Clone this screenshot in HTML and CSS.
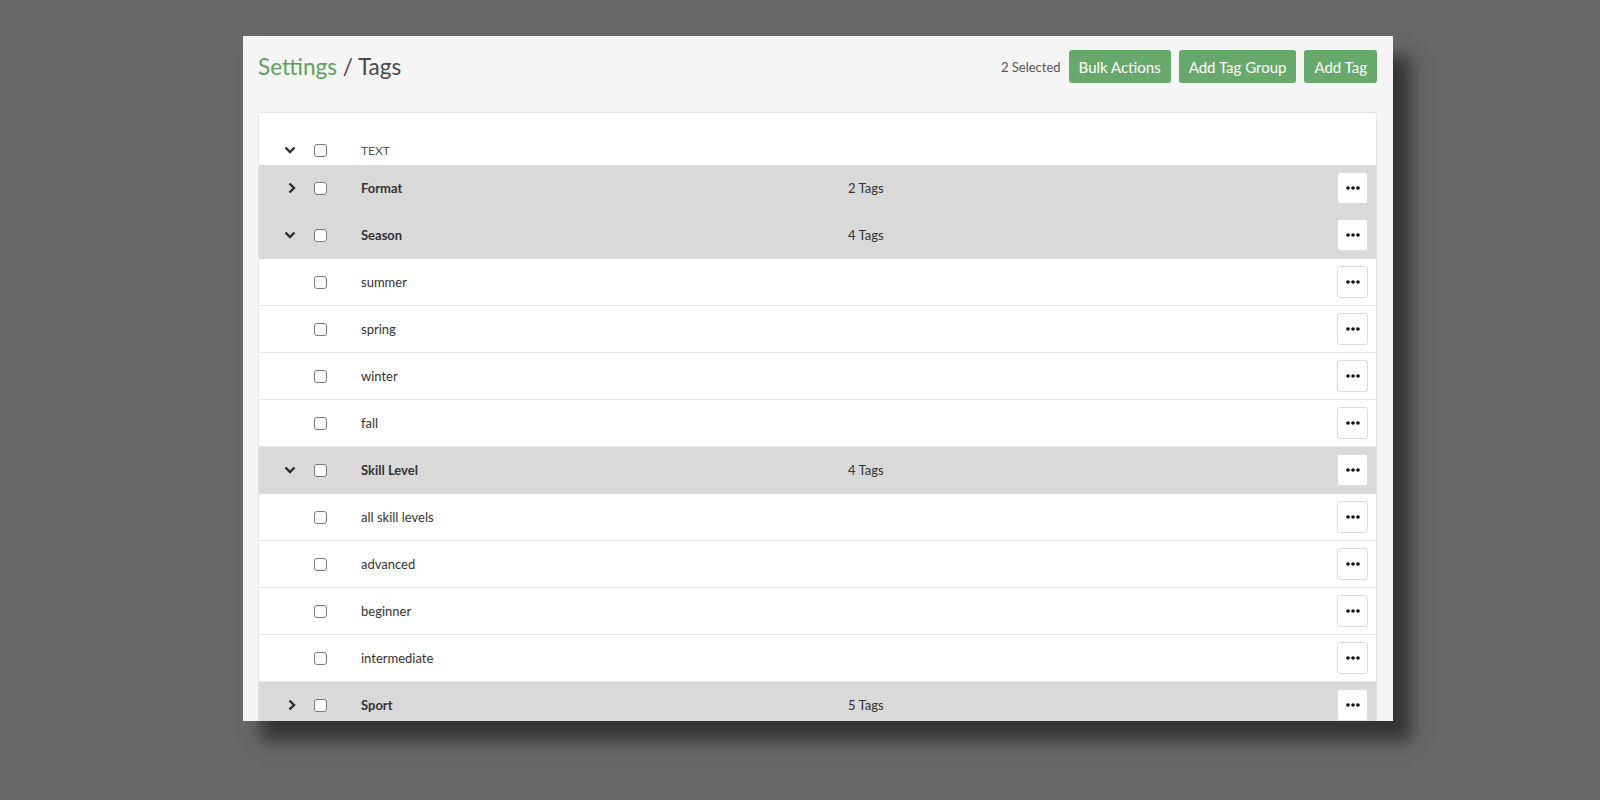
FILE: index.html
```html
<!DOCTYPE html>
<html>
<head>
  <meta charset='utf-8'>
  <title>Settings / Tags</title>
  <meta name='viewport' content='width=device-width, initial-scale=1'>
  <link rel="stylesheet" href="styles.css">
</head>

<body>
  <div class="window">
    <div class="topbar">
      <div class="title"><span class="crumb">Settings</span> / Tags</div>
      <div class="actions">
        <span class="selected">2 Selected</span>
        <button class="btn">Bulk Actions</button>
        <button class="btn">Add Tag Group</button>
        <button class="btn">Add Tag</button>
      </div>
    </div>

    <div class="card">
      <div class="head">
        <div class="toggle"><svg class="chev" width="12" height="8" viewBox="0 0 12 8"><path d="M1.5 1.5 6 6 10.5 1.5" /></svg></div>
        <div class="check"><span class="box"></span></div>
        <div class="name">TEXT</div>
      </div>

      <div class="row group">
        <div class="toggle"><svg class="chev" width="8" height="12" viewBox="0 0 8 12"><path d="M1.5 1.5 6 6 1.5 10.5" /></svg></div>
        <div class="check"><span class="box"></span></div>
        <div class="name">Format</div>
        <div class="count">2 Tags</div>
        <div class="more"><button class="dots"><svg width="14" height="4" viewBox="0 0 14 4"><circle cx="2" cy="2" r="1.8"/><circle cx="7" cy="2" r="1.8"/><circle cx="12" cy="2" r="1.8"/></svg></button></div>
      </div>

      <div class="row group">
        <div class="toggle"><svg class="chev" width="12" height="8" viewBox="0 0 12 8"><path d="M1.5 1.5 6 6 10.5 1.5" /></svg></div>
        <div class="check"><span class="box"></span></div>
        <div class="name">Season</div>
        <div class="count">4 Tags</div>
        <div class="more"><button class="dots"><svg width="14" height="4" viewBox="0 0 14 4"><circle cx="2" cy="2" r="1.8"/><circle cx="7" cy="2" r="1.8"/><circle cx="12" cy="2" r="1.8"/></svg></button></div>
      </div>
      <div class="row">
        <div class="toggle"></div>
        <div class="check"><span class="box"></span></div>
        <div class="name">summer</div>
        <div class="count"></div>
        <div class="more"><button class="dots"><svg width="14" height="4" viewBox="0 0 14 4"><circle cx="2" cy="2" r="1.8"/><circle cx="7" cy="2" r="1.8"/><circle cx="12" cy="2" r="1.8"/></svg></button></div>
      </div>
      <div class="row">
        <div class="toggle"></div>
        <div class="check"><span class="box"></span></div>
        <div class="name">spring</div>
        <div class="count"></div>
        <div class="more"><button class="dots"><svg width="14" height="4" viewBox="0 0 14 4"><circle cx="2" cy="2" r="1.8"/><circle cx="7" cy="2" r="1.8"/><circle cx="12" cy="2" r="1.8"/></svg></button></div>
      </div>
      <div class="row">
        <div class="toggle"></div>
        <div class="check"><span class="box"></span></div>
        <div class="name">winter</div>
        <div class="count"></div>
        <div class="more"><button class="dots"><svg width="14" height="4" viewBox="0 0 14 4"><circle cx="2" cy="2" r="1.8"/><circle cx="7" cy="2" r="1.8"/><circle cx="12" cy="2" r="1.8"/></svg></button></div>
      </div>
      <div class="row">
        <div class="toggle"></div>
        <div class="check"><span class="box"></span></div>
        <div class="name">fall</div>
        <div class="count"></div>
        <div class="more"><button class="dots"><svg width="14" height="4" viewBox="0 0 14 4"><circle cx="2" cy="2" r="1.8"/><circle cx="7" cy="2" r="1.8"/><circle cx="12" cy="2" r="1.8"/></svg></button></div>
      </div>

      <div class="row group">
        <div class="toggle"><svg class="chev" width="12" height="8" viewBox="0 0 12 8"><path d="M1.5 1.5 6 6 10.5 1.5" /></svg></div>
        <div class="check"><span class="box"></span></div>
        <div class="name">Skill Level</div>
        <div class="count">4 Tags</div>
        <div class="more"><button class="dots"><svg width="14" height="4" viewBox="0 0 14 4"><circle cx="2" cy="2" r="1.8"/><circle cx="7" cy="2" r="1.8"/><circle cx="12" cy="2" r="1.8"/></svg></button></div>
      </div>
      <div class="row">
        <div class="toggle"></div>
        <div class="check"><span class="box"></span></div>
        <div class="name">all skill levels</div>
        <div class="count"></div>
        <div class="more"><button class="dots"><svg width="14" height="4" viewBox="0 0 14 4"><circle cx="2" cy="2" r="1.8"/><circle cx="7" cy="2" r="1.8"/><circle cx="12" cy="2" r="1.8"/></svg></button></div>
      </div>
      <div class="row">
        <div class="toggle"></div>
        <div class="check"><span class="box"></span></div>
        <div class="name">advanced</div>
        <div class="count"></div>
        <div class="more"><button class="dots"><svg width="14" height="4" viewBox="0 0 14 4"><circle cx="2" cy="2" r="1.8"/><circle cx="7" cy="2" r="1.8"/><circle cx="12" cy="2" r="1.8"/></svg></button></div>
      </div>
      <div class="row">
        <div class="toggle"></div>
        <div class="check"><span class="box"></span></div>
        <div class="name">beginner</div>
        <div class="count"></div>
        <div class="more"><button class="dots"><svg width="14" height="4" viewBox="0 0 14 4"><circle cx="2" cy="2" r="1.8"/><circle cx="7" cy="2" r="1.8"/><circle cx="12" cy="2" r="1.8"/></svg></button></div>
      </div>
      <div class="row">
        <div class="toggle"></div>
        <div class="check"><span class="box"></span></div>
        <div class="name">intermediate</div>
        <div class="count"></div>
        <div class="more"><button class="dots"><svg width="14" height="4" viewBox="0 0 14 4"><circle cx="2" cy="2" r="1.8"/><circle cx="7" cy="2" r="1.8"/><circle cx="12" cy="2" r="1.8"/></svg></button></div>
      </div>

      <div class="row group">
        <div class="toggle"><svg class="chev" width="8" height="12" viewBox="0 0 8 12"><path d="M1.5 1.5 6 6 1.5 10.5" /></svg></div>
        <div class="check"><span class="box"></span></div>
        <div class="name">Sport</div>
        <div class="count">5 Tags</div>
        <div class="more"><button class="dots"><svg width="14" height="4" viewBox="0 0 14 4"><circle cx="2" cy="2" r="1.8"/><circle cx="7" cy="2" r="1.8"/><circle cx="12" cy="2" r="1.8"/></svg></button></div>
      </div>
    </div>
  </div>
</body>
</html>
```

FILE: styles.css
```css
html, body {
  height: 100%;
  margin: 0;
}

body {
  background-color: #686868;
  font-family: Lato, "Open Sans", Arial, sans-serif;
  color: #333;
  overflow: hidden;
}

.window {
  box-sizing: border-box;
  width: 1150px;
  height: 685px;
  margin: 36px 0 0 243px;
  padding: 14px 16px 0 15px;
  background-color: #f5f5f5;
  box-shadow: 18px 20px 16px rgba(0, 0, 0, 0.5);
  overflow: hidden;
}

.topbar {
  height: 33px;
  display: flex;
  align-items: center;
  justify-content: space-between;
}

.title {
  font-size: 22.5px;
  color: #4a4a4a;
}

.crumb {
  color: #5ea062;
}

.actions {
  display: flex;
  align-items: center;
  gap: 8px;
}

.selected {
  font-size: 13px;
  color: #555;
}

.btn {
  height: 33px;
  padding: 0 10px;
  border: 0;
  border-radius: 3px;
  background-color: #67a86b;
  color: #fff;
  font-family: inherit;
  font-size: 15px;
}

.card {
  margin-top: 29px;
  background-color: #fff;
  border: 1px solid #e4e4e4;
  border-radius: 3px;
}

.head, .row {
  display: grid;
  grid-template-columns: 46px 56px 487px 1fr 48px;
  align-items: center;
}

.head {
  height: 30px;
  padding-top: 22px;
  font-size: 12px;
  color: #555;
}

.row {
  box-sizing: border-box;
  height: 47px;
  font-size: 13px;
  border-bottom: 1px solid #e8e8e8;
}

.row.group {
  background-color: #d9d9d9;
  border-bottom-color: #d9d9d9;
  font-weight: bold;
}

.toggle {
  display: flex;
  justify-content: flex-end;
  padding-right: 9px;
}

.chev {
  display: block;
}

.chev path {
  fill: none;
  stroke: #2e2e2e;
  stroke-width: 2.4;
}

.check {
  display: flex;
  padding-left: 9px;
}

.box {
  box-sizing: border-box;
  width: 13px;
  height: 13px;
  border: 1px solid #7d7d7d;
  border-radius: 3px;
  background-color: #fff;
}

.count {
  font-weight: normal;
}

.more {
  display: flex;
  justify-content: flex-end;
  padding-right: 8px;
}

.dots {
  box-sizing: border-box;
  width: 31px;
  height: 32px;
  padding: 0;
  display: flex;
  align-items: center;
  justify-content: center;
  background-color: #fff;
  border: 1px solid #dcdcdc;
  border-radius: 3px;
}

.dots svg {
  display: block;
  fill: #111;
}
```
